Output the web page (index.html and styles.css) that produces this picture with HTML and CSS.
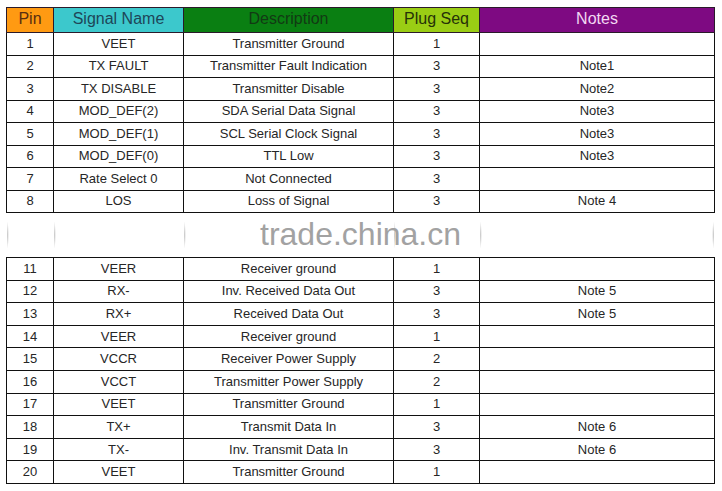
FILE: index.html
```html
<!DOCTYPE html>
<html>
<head>
<meta charset="utf-8">
<link rel="stylesheet" href="styles.css">
</head>
<body>
<div class="wrap">
<table class="pins">
<colgroup>
<col class="c-pin"><col class="c-sig"><col class="c-desc"><col class="c-seq"><col class="c-notes">
</colgroup>
<thead>
<tr class="head">
<th class="h-pin">Pin</th>
<th class="h-sig">Signal Name</th>
<th class="h-desc">Description</th>
<th class="h-seq">Plug Seq</th>
<th class="h-notes">Notes</th>
</tr>
</thead>
<tbody>
<tr><td>1</td><td>VEET</td><td>Transmitter Ground</td><td>1</td><td></td></tr>
<tr><td>2</td><td>TX FAULT</td><td>Transmitter Fault Indication</td><td>3</td><td>Note1</td></tr>
<tr><td>3</td><td>TX DISABLE</td><td>Transmitter Disable</td><td>3</td><td>Note2</td></tr>
<tr><td>4</td><td>MOD_DEF(2)</td><td>SDA Serial Data Signal</td><td>3</td><td>Note3</td></tr>
<tr><td>5</td><td>MOD_DEF(1)</td><td>SCL Serial Clock Signal</td><td>3</td><td>Note3</td></tr>
<tr><td>6</td><td>MOD_DEF(0)</td><td>TTL Low</td><td>3</td><td>Note3</td></tr>
<tr><td>7</td><td>Rate Select 0</td><td>Not Connected</td><td>3</td><td></td></tr>
<tr><td>8</td><td>LOS</td><td>Loss of Signal</td><td>3</td><td>Note 4</td></tr>
<tr class="gap"><td></td><td></td><td></td><td></td><td></td></tr>
<tr class="lo"><td>11</td><td>VEER</td><td>Receiver ground</td><td>1</td><td></td></tr>
<tr class="lo"><td>12</td><td>RX-</td><td>Inv. Received Data Out</td><td>3</td><td>Note 5</td></tr>
<tr class="lo"><td>13</td><td>RX+</td><td>Received Data Out</td><td>3</td><td>Note 5</td></tr>
<tr class="lo"><td>14</td><td>VEER</td><td>Receiver ground</td><td>1</td><td></td></tr>
<tr class="lo"><td>15</td><td>VCCR</td><td>Receiver Power Supply</td><td>2</td><td></td></tr>
<tr class="lo"><td>16</td><td>VCCT</td><td>Transmitter Power Supply</td><td>2</td><td></td></tr>
<tr class="lo"><td>17</td><td>VEET</td><td>Transmitter Ground</td><td>1</td><td></td></tr>
<tr class="lo"><td>18</td><td>TX+</td><td>Transmit Data In</td><td>3</td><td>Note 6</td></tr>
<tr class="lo"><td>19</td><td>TX-</td><td>Inv. Transmit Data In</td><td>3</td><td>Note 6</td></tr>
<tr class="lo"><td>20</td><td>VEET</td><td>Transmitter Ground</td><td>1</td><td></td></tr>
</tbody>
</table>
<div class="watermark">trade.china.cn</div>
</div>
</body>
</html>
```
FILE: styles.css
```css
html, body {
  margin: 0;
  padding: 0;
  background: #ffffff;
}
body {
  font-family: "Liberation Sans", Arial, sans-serif;
  color: #222222;
}
.wrap {
  position: relative;
  padding: 7px 0 0 6px;
}
.pins {
  border-collapse: collapse;
  table-layout: fixed;
  width: 708px;
}
.c-pin { width: 47px; }
.c-sig { width: 130px; }
.c-desc { width: 210px; }
.c-seq { width: 86px; }
.c-notes { width: 235px; }

.pins th, .pins td {
  border: 1px solid #111111;
  padding: 0;
  text-align: center;
  white-space: nowrap;
  overflow: hidden;
}
.pins th {
  height: 21px;
  padding-bottom: 3px;
  font-size: 16px;
  font-weight: normal;
  line-height: 20px;
  border-color: #2a1a2a;
}
.pins td {
  height: 20.5px;
  font-size: 13px;
  line-height: 15px;
  padding-bottom: 1px;
  color: #262626;
}
.pins tr.lo td {
  height: 20.6px;
}
.h-pin { background: #ff9a12; color: #5a2e10; }
.h-sig { background: #3cc8cc; color: #1e4658; }
.h-desc { background: #0a7f12; color: #123a14; }
.h-seq { background: #9acd14; color: #263208; }
.h-notes { background: #7e0a82; color: #f2d8f2; }

.pins tr.gap td {
  height: 44px;
  padding: 0;
  border-left-color: transparent;
  border-right-color: transparent;
  background-image:
    radial-gradient(ellipse 2px 14px at 0 50%, rgba(90,90,90,0.4), rgba(255,255,255,0) 100%);
  background-repeat: no-repeat;
}
.pins tr.gap td:last-child {
  background-image:
    radial-gradient(ellipse 2px 14px at 0 50%, rgba(90,90,90,0.4), rgba(255,255,255,0) 100%),
    radial-gradient(ellipse 2px 14px at 100% 50%, rgba(90,90,90,0.4), rgba(255,255,255,0) 100%);
}
.watermark {
  position: absolute;
  left: 260px;
  top: 216px;
  font-size: 32px;
  line-height: 36px;
  color: #a2a2a2;
  letter-spacing: 0;
}
```
